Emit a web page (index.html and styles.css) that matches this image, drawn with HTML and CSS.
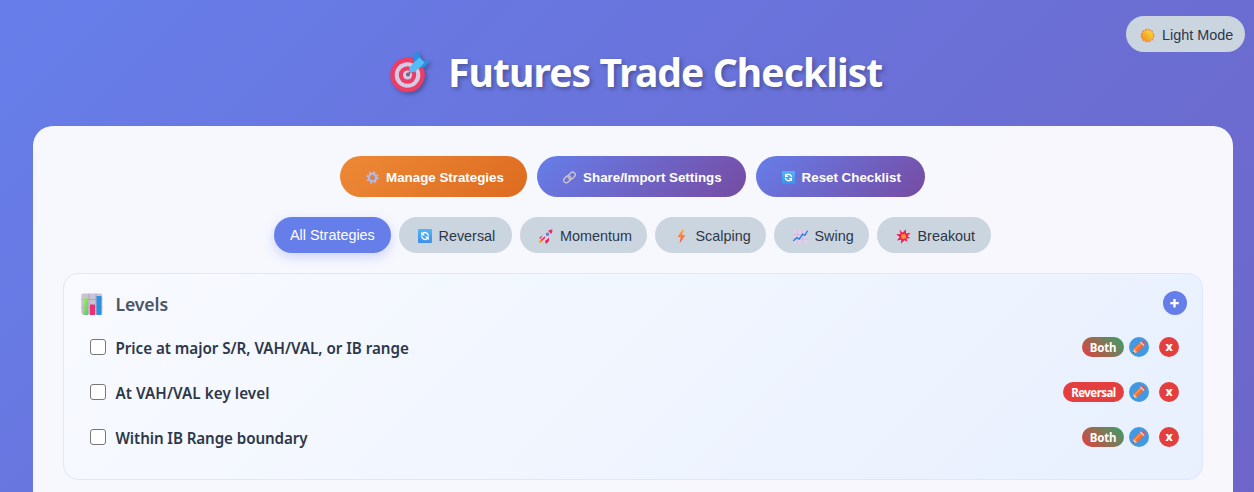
FILE: index.html
```html
<!DOCTYPE html>
<html lang="en">
<head>
<meta charset="utf-8">
<title>Futures Trade Checklist</title>
<link rel="stylesheet" href="styles.css">
</head>
<body>
<svg width="0" height="0" class="defs" aria-hidden="true">
  <defs>
    <linearGradient id="sun" x1="1" y1="0" x2="0" y2="1"><stop offset="0" stop-color="#ffe03a"/><stop offset="1" stop-color="#f08a24"/></linearGradient>
    <linearGradient id="blue" x1="0" y1="0" x2="0" y2="1"><stop offset="0" stop-color="#52b4fa"/><stop offset="1" stop-color="#3d90ea"/></linearGradient>
    <linearGradient id="bolt-fill" x1="0" y1="0" x2="0" y2="1"><stop offset="0" stop-color="#ffb13c"/><stop offset="1" stop-color="#f5474c"/></linearGradient>
    <linearGradient id="green" x1="0" y1="0" x2="1" y2="1"><stop offset="0" stop-color="#b9ec5e"/><stop offset="1" stop-color="#55c877"/></linearGradient>
    <symbol id="refresh" viewBox="0 0 14 14">
      <rect width="14" height="14" rx="1" fill="url(#blue)"/>
      <path d="M10.400 6.800A3.500 3.500 0 0 0 4.800 4.300M3.600 7.200a3.500 3.500 0 0 0 5.600 2.500" fill="none" stroke="#fff" stroke-width="1.500"/>
      <path d="M3.200 2.700v3.800H7zM10.800 11.300V7.500H7z" fill="#fff"/>
    </symbol>
    <symbol id="pencil" viewBox="0 0 14 14">
      <path d="M.8 13.200l1-4.600 3.600 3.600z" fill="#ffc08a"/>
      <path d="M1.800 8.600L7.900 2.500l3.600 3.600-6.100 6.100z" fill="#f76b35"/>
      <path d="M3 9.600L8.700 3.900" stroke="#ff9143" stroke-width="1.600"/>
      <path d="M7.900 2.500l1.200-1.200 3.600 3.600-1.200 1.200z" fill="#dccbe0"/>
      <path d="M9.100 1.300l.5-.5q.8-.7 1.600 0l2 2q.7.800 0 1.600l-.5.500z" fill="#fa5045"/>
      <path d="M.8 13.200l.4-1.600 1.200 1.200z" fill="#593f58"/>
    </symbol>
  </defs>
</svg>
<button class="theme">
  <svg class="ico15" viewBox="0 0 16 16"><circle cx="8" cy="8" r="6.500" fill="#f08a35" stroke="#f08a35" stroke-width="1.600" stroke-dasharray="2.100 1.300"/><circle cx="8" cy="8" r="6" fill="url(#sun)"/></svg>
  <span>Light Mode</span>
</button>
<h1 class="title">
  <svg class="target" viewBox="0 0 42 44">
    <circle cx="18.500" cy="25" r="17.300" fill="#ed3d66"/>
    <circle cx="18.500" cy="25" r="12.800" fill="#d5c9e4"/>
    <circle cx="18.500" cy="25" r="8.700" fill="#ed3d66"/>
    <circle cx="18.500" cy="25" r="4.600" fill="#d5c9e4"/>
    <circle cx="19" cy="24.500" r="2" fill="#786483"/>
    <path d="M19 24.500L22 21" stroke="#76677f" stroke-width="1.500"/>
    <path d="M25 12l-.5-7 4.500-4 3.500 9zM31 16l1-5 9-.5-5 6.500-6 1z" fill="#2a8fe2"/>
    <path d="M20 19q1-3.500 10.500-11.500l5 5q-8 9-11.500 9.800t-4-3.300z" fill="#55bdf5"/>
  </svg>
  <span>Futures Trade Checklist</span>
</h1>
<main class="card">
  <div class="actions">
    <button class="action orange">
      <svg class="ico13" viewBox="0 0 14 14"><circle cx="7" cy="7" r="5.700" fill="none" stroke="#b9b3d2" stroke-width="2.200" stroke-dasharray="2.400 2.077"/><circle cx="7" cy="7" r="3.800" fill="none" stroke="#c0b8d6" stroke-width="2.600"/><circle cx="7" cy="7" r="2.500" fill="none" stroke="#8d86a8" stroke-width=".6"/></svg>
      <span>Manage Strategies</span>
    </button>
    <button class="action violet">
      <svg class="ico13" viewBox="0 0 14 14"><g fill="none" stroke="#cbc3cf" stroke-width="1.500"><rect x="5.200" y="2.200" width="8.400" height="5.600" rx="2.800" transform="rotate(-45 9.400 5)"/><rect x=".4" y="6.200" width="8.400" height="5.600" rx="2.800" transform="rotate(-45 4.600 9)"/></g></svg>
      <span>Share/Import Settings</span>
    </button>
    <button class="action violet">
      <svg class="ico13"><use href="#refresh"/></svg>
      <span>Reset Checklist</span>
    </button>
  </div>
  <nav class="tabs">
    <button class="tab on w-all"><span>All Strategies</span></button>
    <button class="tab w-rev"><svg class="ico14"><use href="#refresh"/></svg><span>Reversal</span></button>
    <button class="tab w-mom">
      <svg class="ico15" viewBox="0 0 15 15"><path d="M1 9l4-3 3-1-2 6zM7 12l4-4v4l-3 3z" fill="#ec2358"/><path d="M1 14q0-3 2-4l2 2q-1 2-4 2z" fill="#ff9d24"/><path d="M2.800 9.700Q5 4 10.500 2l3 3Q11 10 5.500 12.500z" fill="#ddd3ea"/><path d="M10.200 2Q12 .6 14.500.6q0 2.500-1.300 4.300z" fill="#ee285e"/><circle cx="9.500" cy="5.200" r="1.500" fill="#4c9de8" stroke="#596080" stroke-width=".5"/><path d="M3.500 11.500l3.500-3.500" stroke="#ed2459" stroke-width="1.600"/></svg>
      <span>Momentum</span>
    </button>
    <button class="tab w-sca">
      <svg class="ico15" viewBox="0 0 15 15"><path d="M8.300.5L3.600 8h3.200l-1.300 6.500L11.500 6H8.200l1.900-5.500z" fill="url(#bolt-fill)"/></svg>
      <span>Scalping</span>
    </button>
    <button class="tab w-swi">
      <svg class="ico15" viewBox="0 0 15 15"><rect x=".3" y="1" width="14.500" height="13.500" rx="1" fill="#e0d0ec"/><path d="M0 5.500h15M0 10h15M4.500 1v13.500M9.500 1v13.500" stroke="#c4b0d8" stroke-width=".6"/><path d="M.3 12l3.500-3.300L6.200 10l3.500-5 2 1.500 2.800-4.800" fill="none" stroke="#2588de" stroke-width="1.400"/></svg>
      <span>Swing</span>
    </button>
    <button class="tab w-bre">
      <svg class="ico15" viewBox="0 0 15 15"><path d="M3.500.5l3 3.200L9.800.3 10 4.500l4.500-.7L11.500 7l2.700 2.200-3.700.3.900 3.200-3-1.500L5 14.700l.2-4-4.200.8L3.600 8 .2 5.300 4.500 5z" fill="#f11c52"/><path d="M5.300 5.300l1.800.3 1.500-1.300.3 1.900 1.800.3-1 1.500.6 1.400-1.900.1-1.200 1.100-.8-1.400-1.700 0 .8-1.700z" fill="#ff9632"/></svg>
      <span>Breakout</span>
    </button>
  </nav>
  <section class="group">
    <header class="head">
      <svg class="chart" viewBox="0 0 22 22"><rect x=".3" y=".5" width="21" height="21" rx="2" fill="#cac2d5"/><path d="M.5 6.500h21M.5 14.500h21M8 .7v21M15 .7v21" stroke="#aaa1b9" stroke-width=".8"/><rect x="2" y="5" width="5" height="17" rx=".6" fill="url(#green)"/><rect x="9" y="11.500" width="5" height="10.500" rx=".6" fill="#e83073"/><rect x="15.500" y="3" width="5" height="19" rx=".6" fill="#2b91e0"/></svg>
      <h2>Levels</h2>
      <button class="add"><svg viewBox="0 0 24 24"><path d="M11.500 8v8.500M7.300 12.200H15.800" stroke="#fff" stroke-width="2.300"/></svg></button>
    </header>
    <div class="row">
      <span class="box"></span><span class="label l1">Price at major S/R, VAH/VAL, or IB range</span>
      <span class="badge both">Both</span><button class="round edit"><svg><use href="#pencil"/></svg></button><button class="round del">x</button>
    </div>
    <div class="row">
      <span class="box"></span><span class="label l2">At VAH/VAL key level</span>
      <span class="badge reversal">Reversal</span><button class="round edit"><svg><use href="#pencil"/></svg></button><button class="round del">x</button>
    </div>
    <div class="row">
      <span class="box"></span><span class="label l3">Within IB Range boundary</span>
      <span class="badge both">Both</span><button class="round edit"><svg><use href="#pencil"/></svg></button><button class="round del">x</button>
    </div>
  </section>
</main>
</body>
</html>
```
FILE: styles.css
```css
* { box-sizing: border-box; }
html { height: 492px; overflow: hidden; }
body {
  margin: 0;
  height: 492px;
  overflow: hidden;
  padding: 40px 21px 0 33px;
  font-family: "Noto Sans", "Open Sans", sans-serif;
  background: linear-gradient(135deg, #667eea 0%, #764ba2 100%) 0 0 / 1254px 2400px no-repeat;
}
button { border: 0; margin: 0; padding: 0; font-family: "Liberation Sans", Arial, sans-serif; }
span, h2 { white-space: nowrap; }
svg { display: block; flex: none; }
.defs { position: absolute; }
.ico13 { width: 13px; height: 13px; }
.ico14 { width: 14px; height: 14px; }
.ico15 { width: 15px; height: 15px; }
.theme {
  position: absolute;
  top: 16px;
  right: 9px;
  width: 119px;
  height: 36px;
  padding: 2px 0 0 14px;
  display: flex;
  align-items: center;
  gap: 7px;
  border-radius: 18px;
  background: #cbd5e0;
  color: #2d3748;
  font-size: 14.4px;
}
.title {
  height: 86px;
  margin: 0;
  padding: 12px 0 0 356px;
  display: flex;
  align-items: flex-start;
  gap: 17px;
  color: #fff;
  font-size: 39px;
  font-weight: 700;
  line-height: 40px;
  letter-spacing: -0.9px;
  text-shadow: 2px 2px 4px rgba(0, 0, 0, 0.3);
}
.target { width: 42px; height: 44px; margin-top: -2px; filter: drop-shadow(2px 2px 2px rgba(0, 0, 0, 0.3)); }
.card {
  width: 1200px;
  height: 366px;
  padding: 30px 30px 0;
  border-radius: 20px 20px 0 0;
  background: rgba(255, 255, 255, 0.95);
}
.actions { display: flex; justify-content: center; gap: 10px; height: 41px; margin-right: 1px; }
.action {
  display: flex;
  align-items: center;
  gap: 7px;
  padding: 2px 24px 0 26px;
  border-radius: 21px;
  color: #fff;
  font-size: 13.33px;
  font-weight: 700;
}
.orange { width: 187px; background: linear-gradient(135deg, #ed8936, #dd6b20); }
.violet { background: linear-gradient(135deg, #667eea, #764ba2); }
.tabs { display: flex; justify-content: center; gap: 8px; height: 36px; margin: 20px 1px 0 0; }
.tab {
  display: flex;
  align-items: center;
  gap: 7px;
  padding: 2px 0 0 18.5px;
  border-radius: 18px;
  background: #cbd5e0;
  color: #2d3748;
  font-size: 14.4px;
}
.tab.on { padding: 0 0 0 16px; background: #667eea; color: #fff; box-shadow: 0 4px 12px rgba(102, 126, 234, 0.3); }
.w-all { width: 117px; }
.w-rev { width: 113px; }
.w-mom { width: 127px; padding-left: 18px; }
.w-sca { width: 111px; }
.w-swi { width: 95px; }
.w-bre { width: 114px; }
.group {
  height: 207px;
  margin-top: 20px;
  padding: 17px 15px 0 17px;
  border: 1px solid #dfe7fd;
  border-radius: 15px;
  background: linear-gradient(135deg, #f8faff, #e8f0fe);
}
.head { display: flex; height: 34px; }
.chart { width: 22px; height: 22px; margin: 2px 0 0; }
h2 {
  margin: 1px 0 0 12.5px;
  color: #4a5568;
  font-size: 17.6px;
  font-weight: 600;
  line-height: 25px;
  letter-spacing: -0.1px;
}
.add { width: 24px; height: 24px; margin-left: auto; border-radius: 50%; background: #667eea; }
.row { display: flex; align-items: center; height: 45px; padding: 0 8px 1px 8.500px; }
.box { width: 16px; height: 16px; margin-right: 10px; border: 1px solid #767676; border-radius: 3px; background: #fff; }
.label { color: #2d3748; font-size: 15.2px; font-weight: 600; line-height: 22px; padding-top: 1px; }
.l1 { letter-spacing: -0.04px; }
.l2 { letter-spacing: 0.07px; }
.l3 { letter-spacing: -0.1px; }
.badge {
  height: 20px;
  margin-left: auto;
  border-radius: 10px;
  padding: 0 7px;
  color: #fff;
  font-size: 11.5px;
  font-weight: 700;
  line-height: 21px;
  text-align: center;
  letter-spacing: -0.25px;
}
.both { width: 42px; background: linear-gradient(45deg, #e53e3e, #38a169); }
.reversal { width: 61px; background: #e53e3e; letter-spacing: -0.55px; }
.round { width: 20px; height: 20px; margin-left: 5px; border-radius: 50%; }
.edit { display: grid; place-items: center; background: #4299e1; }
.edit svg { width: 14px; height: 14px; }
.del {
  margin-left: 10px;
  background: #e53e3e;
  color: #fff;
  font-family: "Noto Sans", sans-serif;
  font-size: 12px;
  font-weight: 800;
  line-height: 18px;
}
```
